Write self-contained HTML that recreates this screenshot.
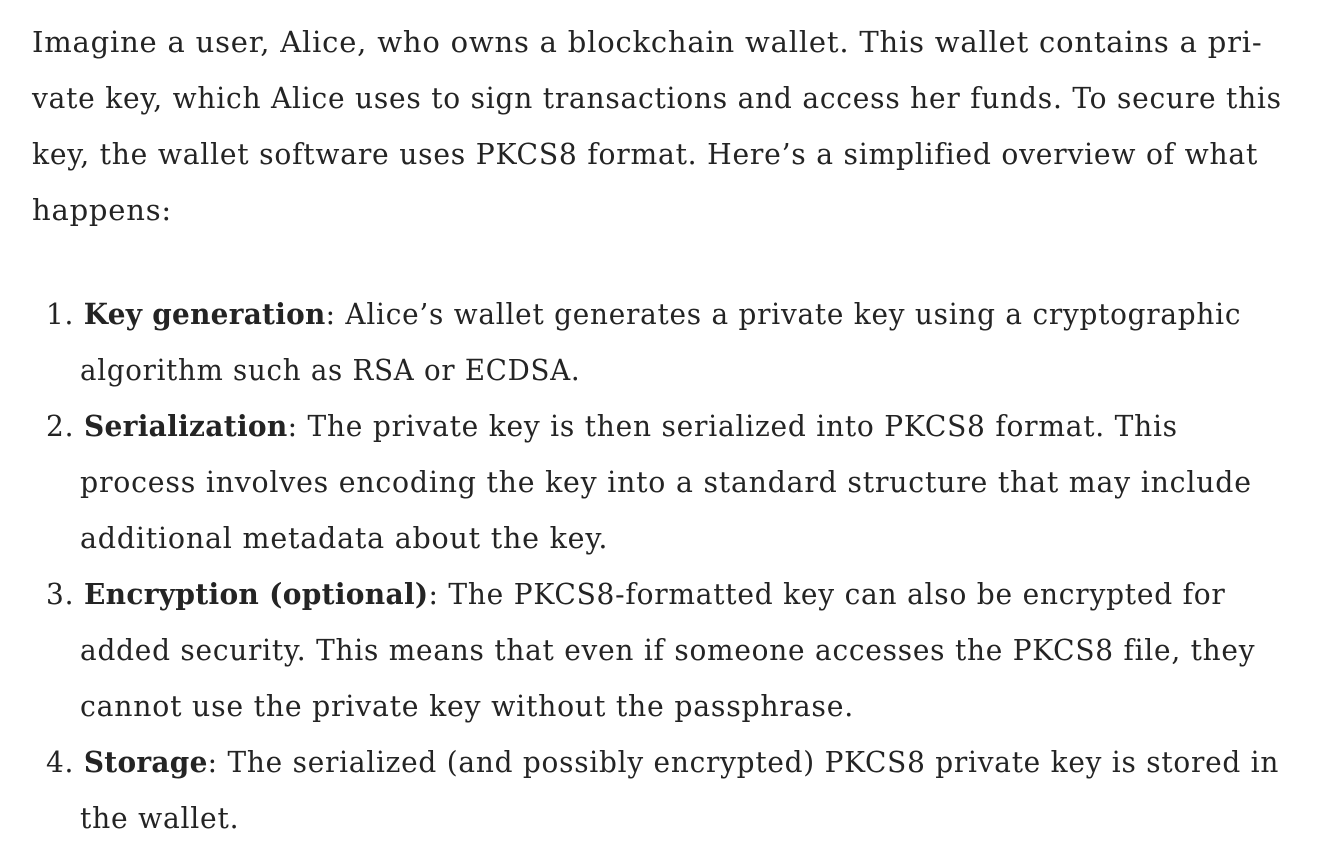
<!DOCTYPE html>
<html><head><meta charset="utf-8"><style>
html,body{margin:0;padding:0;background:#fff;}
body{width:1320px;height:868px;overflow:hidden;font-family:"DejaVu Serif","Liberation Serif",serif;font-size:29px;letter-spacing:0.8px;color:#242424;}
.l{position:absolute;white-space:nowrap;line-height:56px;height:56px;transform-origin:0 50%;}
b{font-weight:bold;letter-spacing:0.3px;}
</style></head><body>
<div class="l" style="left:32px;top:14px">Imagine a user, Alice, who owns a blockchain wallet. This wallet contains a pri-</div>
<div class="l" style="left:32px;top:70px;transform:scaleX(0.967)">vate key, which Alice uses to sign transactions and access her funds. To secure this</div>
<div class="l" style="left:32px;top:126px;transform:scaleX(0.971)">key, the wallet software uses PKCS8 format. Here’s a simplified overview of what</div>
<div class="l" style="left:32px;top:182px">happens:</div>

<div class="l" style="left:46px;top:286px;transform:scaleX(0.962)">1. <b>Key generation</b>: Alice’s wallet generates a private key using a cryptographic</div>
<div class="l" style="left:80px;top:342px;transform:scaleX(0.952)">algorithm such as RSA or ECDSA.</div>
<div class="l" style="left:46px;top:398px;transform:scaleX(0.967)">2. <b>Serialization</b>: The private key is then serialized into PKCS8 format. This</div>
<div class="l" style="left:80px;top:454px;transform:scaleX(0.978)">process involves encoding the key into a standard structure that may include</div>
<div class="l" style="left:80px;top:510px;transform:scaleX(0.983)">additional metadata about the key.</div>
<div class="l" style="left:46px;top:566px;transform:scaleX(0.967)">3. <b>Encryption (optional)</b>: The PKCS8-formatted key can also be encrypted for</div>
<div class="l" style="left:80px;top:622px;transform:scaleX(0.964)">added security. This means that even if someone accesses the PKCS8 file, they</div>
<div class="l" style="left:80px;top:678px;transform:scaleX(0.976)">cannot use the private key without the passphrase.</div>
<div class="l" style="left:46px;top:734px;transform:scaleX(0.963)">4. <b>Storage</b>: The serialized (and possibly encrypted) PKCS8 private key is stored in</div>
<div class="l" style="left:80px;top:790px;transform:scaleX(0.97)">the wallet.</div>
</body></html>
